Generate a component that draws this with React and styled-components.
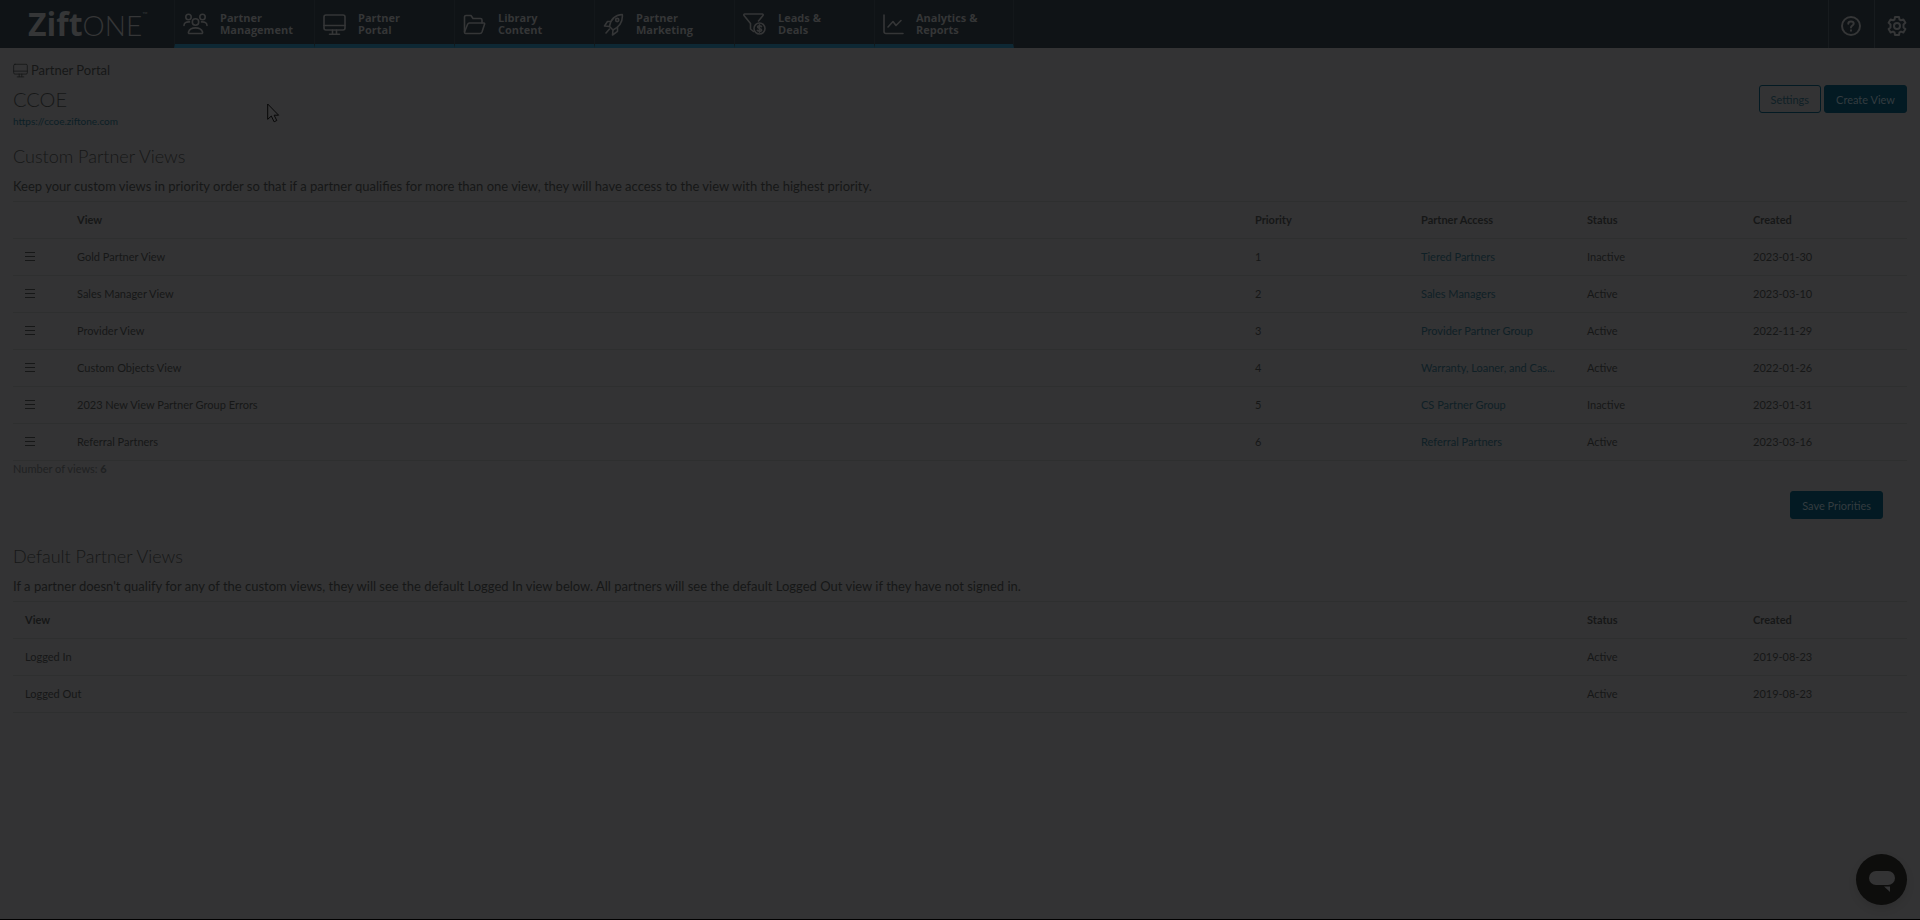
import React from "react";
import styled, { createGlobalStyle } from "styled-components";

const GlobalStyle = createGlobalStyle`
  * {
    box-sizing: border-box;
  }

  body {
    margin: 0;
    background: #333334;
    color: #161717;
    font-family: Lato, "Liberation Sans", sans-serif;
    font-size: 11px;
  }
`;

const PartnersIcon = () => (
  <Glyph width="25" height="22" viewBox="0 0 25 22">
    <circle cx="5.5" cy="4" r="2.7" />
    <circle cx="19.5" cy="4" r="2.7" />
    <circle cx="12.5" cy="9" r="3.2" />
    <path d="M1 12.500C1 10 3 8.700 6.500 8.900M24 12.500C24 10 22 8.700 18.500 8.900" />
    <path d="M6.500 20.500h12c1 0 1.300-.8 1-1.600-1-2.800-3.400-4-7-4s-6 1.200-7 4c-.3.800 0 1.600 1 1.600z" />
  </Glyph>
);

const MonitorIcon = ({ size = 23, stroke }) => (
  <Glyph width={size} height={size} viewBox="0 0 23 23" $stroke={stroke}>
    <rect x="1" y="2" width="21" height="15" rx="2" />
    <path d="M1 12.500h21M9.500 17v4M13.500 17v4M6.500 21.300h10" />
  </Glyph>
);

const FolderIcon = () => (
  <Glyph width="23" height="22" viewBox="0 0 23 22">
    <path d="M1.500 19V4A1.500 1.500 0 0 1 3 2.500h5l2 3h7.500A1.500 1.500 0 0 1 19 7v3" />
    <path d="M1.500 19l3-7.500c.4-1 1-1.500 2-1.500h14.500c.5 0 .8.500.6 1l-2.600 8c-.4 1-1 1.500-2 1.500H2.500c-.6 0-1-.5-1-1.500z" />
  </Glyph>
);

const RocketIcon = () => (
  <Glyph width="21" height="23" viewBox="0 0 21 23">
    <path d="M6.500 13.500C7.500 7 11.500 2 19.300 1.500 20 9 16 14 10 17z" />
    <circle cx="14.200" cy="7" r="1.600" />
    <path d="M8 8.500H4.500L1.500 13l5 .5M14.500 14.300v4L9.500 22l.5-5M6.500 16l-3.500 4" />
  </Glyph>
);

const FunnelIcon = () => (
  <Glyph width="23" height="24" viewBox="0 0 23 24">
    <path d="M10.500 19.500l-3-2.500v-5.500L1 3.500C.6 2.700 1 2 1.800 2h17.400c.8 0 1.200.7.800 1.500L15.500 9" />
    <circle cx="16.500" cy="16.500" r="5.500" />
    <path d="M18.500 14.600c-.5-.6-1.200-.8-2-.8-1.100 0-1.900.5-1.900 1.300 0 1.800 4 .9 4 2.900 0 .8-.9 1.300-2.100 1.300-.9 0-1.700-.3-2.200-1M16.500 12.700v7.600" />
  </Glyph>
);

const ChartIcon = () => (
  <Glyph width="21" height="22" viewBox="0 0 21 22">
    <path d="M1 2v16.500a2 2 0 0 0 2 2h17M5 14l5-5.500 3 4L18 7.500" />
  </Glyph>
);

const HelpIcon = () => (
  <Glyph width="20" height="20" viewBox="0 0 20 20" $stroke={2}>
    <circle cx="10" cy="10" r="9" />
    <path d="M7.300 7.800C7.300 6.300 8.500 5.500 10 5.500s2.700.9 2.700 2.200c0 1.800-2.700 1.900-2.700 3.800M10 14.200v.6" />
  </Glyph>
);

const GearIcon = () => (
  <Glyph width="20" height="20" viewBox="0 0 20 20" $stroke={2}>
    <path d="M8 1h4l.5 2.500 1.500.8 2.400-.9 2 3.400-1.900 1.700v2.900l1.900 1.700-2 3.400-2.400-.9-1.500.8L12 19H8l-.5-2.600-1.500-.8-2.400.9-2-3.400 1.900-1.700V8.500L1.600 6.800l2-3.400 2.400.9 1.500-.8z" />
    <circle cx="10" cy="10" r="3" />
  </Glyph>
);

const navItems = [
  { label: ["Partner", "Management"], icon: <PartnersIcon /> },
  { label: ["Partner", "Portal"], icon: <MonitorIcon /> },
  { label: ["Library", "Content"], icon: <FolderIcon /> },
  { label: ["Partner", "Marketing"], icon: <RocketIcon /> },
  { label: ["Leads &", "Deals"], icon: <FunnelIcon /> },
  { label: ["Analytics &", "Reports"], icon: <ChartIcon /> },
];

const customViews = [
  { name: "Gold Partner View", access: "Tiered Partners", status: "Inactive", created: "2023-01-30" },
  { name: "Sales Manager View", access: "Sales Managers", status: "Active", created: "2023-03-10" },
  { name: "Provider View", access: "Provider Partner Group", status: "Active", created: "2022-11-29" },
  { name: "Custom Objects View", access: "Warranty, Loaner, and Cas...", status: "Active", created: "2022-01-26" },
  { name: "2023 New View Partner Group Errors", access: "CS Partner Group", status: "Inactive", created: "2023-01-31" },
  { name: "Referral Partners", access: "Referral Partners", status: "Active", created: "2023-03-16" },
];

const defaultViews = [
  { name: "Logged In", status: "Active", created: "2019-08-23" },
  { name: "Logged Out", status: "Active", created: "2019-08-23" },
];

const App = () => {
  return (
    <Page>
      <GlobalStyle />
      <Header>
        <Logo href="#">
          <b>Zift</b>
          <span>ONE</span>
          <sup>™</sup>
        </Logo>
        <Nav>
          {navItems.map(({ label, icon }) => (
            <NavLink href="#" key={label.join(" ")}>
              {icon}
              <span>
                {label[0]}
                <br />
                {label[1]}
              </span>
            </NavLink>
          ))}
        </Nav>
        <HeaderButton aria-label="Help">
          <HelpIcon />
        </HeaderButton>
        <HeaderButton aria-label="Settings menu">
          <GearIcon />
        </HeaderButton>
      </Header>

      <Main>
        <Breadcrumb>
          <MonitorIcon size={15} stroke={1.2} />
          Partner Portal
        </Breadcrumb>
        <TitleRow>
          <Title>CCOE</Title>
          <Actions>
            <Button $outline>Settings</Button>
            <Button>Create View</Button>
          </Actions>
        </TitleRow>
        <SiteLink href="#">https://ccoe.ziftone.com</SiteLink>

        <Section>
          <SectionTitle>Custom Partner Views</SectionTitle>
          <Description>
            Keep your custom views in priority order so that if a partner
            qualifies for more than one view, they will have access to the view
            with the highest priority.
          </Description>
          <Table>
            <colgroup>
              <Col $width={52} />
              <Col />
              <Col $width={166} />
              <Col $width={166} />
              <Col $width={166} />
              <Col $width={166} />
            </colgroup>
            <thead>
              <tr>
                <th />
                <th>View</th>
                <th>Priority</th>
                <th>Partner Access</th>
                <th>Status</th>
                <th>Created</th>
              </tr>
            </thead>
            <tbody>
              {customViews.map((view, index) => (
                <tr key={view.name}>
                  <td>
                    <DragHandle aria-label={`Move ${view.name}`}>
                      <i />
                      <i />
                      <i />
                    </DragHandle>
                  </td>
                  <td>{view.name}</td>
                  <td>{index + 1}</td>
                  <td>
                    <a href="#">{view.access}</a>
                  </td>
                  <td>{view.status}</td>
                  <td>{view.created}</td>
                </tr>
              ))}
            </tbody>
          </Table>
          <Count>
            Number of views: <b>{customViews.length}</b>
          </Count>
          <SaveRow>
            <Button>Save Priorities</Button>
          </SaveRow>
        </Section>

        <Section>
          <SectionTitle>Default Partner Views</SectionTitle>
          <Description>
            If a partner doesn't qualify for any of the custom views, they will
            see the default Logged In view below. All partners will see the
            default Logged Out view if they have not signed in.
          </Description>
          <Table>
            <colgroup>
              <Col />
              <Col $width={166} />
              <Col $width={166} />
            </colgroup>
            <thead>
              <tr>
                <th>View</th>
                <th>Status</th>
                <th>Created</th>
              </tr>
            </thead>
            <tbody>
              {defaultViews.map((view) => (
                <tr key={view.name}>
                  <td>{view.name}</td>
                  <td>{view.status}</td>
                  <td>{view.created}</td>
                </tr>
              ))}
            </tbody>
          </Table>
        </Section>
      </Main>

      <ChatButton aria-label="Open chat">
        <svg width="28" height="22" viewBox="0 0 28 22" fill="#333334">
          <rect x="1" y="0" width="26" height="14" rx="7" />
          <path d="M16 15.500h6V21z" />
        </svg>
      </ChatButton>
      <Pointer width="13" height="20" viewBox="0 0 13 20">
        <path d="M.7 1v15.300l3.600-3.300 2.800 5.800 2.700-1.300-2.700-5.300h4.500z" />
      </Pointer>
    </Page>
  );
};

const Page = styled.div`
  position: relative;
  min-height: 100vh;
  border-bottom: 1px solid #000;
`;

const Glyph = styled.svg`
  flex: none;
  fill: none;
  stroke: currentColor;
  stroke-width: ${({ $stroke }) => $stroke || 1.6};
  stroke-linecap: round;
  stroke-linejoin: round;
`;

const Header = styled.header`
  display: flex;
  height: 48px;
  background: #0f1316;
  color: #353637;
`;

const Logo = styled.a`
  display: flex;
  align-items: baseline;
  width: 174px;
  padding-left: 28px;
  color: inherit;
  line-height: 48px;
  text-decoration: none;

  b {
    font-family: "Open Sans", sans-serif;
    font-size: 32px;
    font-weight: 700;
  }

  span {
    font-size: 28px;
    font-weight: 300;
  }

  sup {
    align-self: flex-start;
    font-size: 7px;
    line-height: 28px;
  }
`;

const Nav = styled.nav`
  display: flex;
  flex: 1;
`;

const NavLink = styled.a`
  display: flex;
  align-items: center;
  gap: 12px;
  width: 140px;
  padding: 4px 0 0 8px;
  border-left: 1px solid #13171a;
  border-bottom: 4px solid #0e2834;
  color: inherit;
  font-family: "Open Sans", sans-serif;
  font-size: 11px;
  font-weight: 700;
  line-height: 12px;
  text-decoration: none;

  &:last-child {
    border-right: 1px solid #13171a;
  }
`;

const HeaderButton = styled.button`
  display: flex;
  align-items: center;
  justify-content: center;
  width: 46px;
  padding: 4px 2px 0 0;
  border: 0;
  border-left: 1px solid #171b1e;
  background: none;
  color: inherit;
`;

const Main = styled.main`
  padding: 12px 13px 0;
`;

const Breadcrumb = styled.div`
  display: flex;
  align-items: center;
  gap: 3px;
  font-size: 13px;
  line-height: 20px;
`;

const TitleRow = styled.div`
  display: flex;
  align-items: center;
  justify-content: space-between;
  height: 28px;
  margin-top: 5px;
`;

const Title = styled.h1`
  margin: 0;
  font-size: 20px;
  font-weight: 300;
  line-height: 28px;
`;

const Actions = styled.div`
  display: flex;
  gap: 3px;
`;

const Button = styled.button`
  height: 28px;
  padding: 0 11px;
  border: 1px solid #031a23;
  border-radius: 3px;
  background: ${({ $outline }) => ($outline ? "transparent" : "#031a23")};
  color: ${({ $outline }) => ($outline ? "#0f2026" : "#333c40")};
  font-family: inherit;
  font-size: 11px;
`;

const SiteLink = styled.a`
  display: block;
  color: #0c1f26;
  font-size: 10px;
  line-height: 16px;
  text-decoration: none;
`;

const Section = styled.section`
  padding-top: 15px;
`;

const SectionTitle = styled.h2`
  margin: 0;
  font-size: 18px;
  font-weight: 300;
  line-height: 24px;
`;

const Description = styled.p`
  margin: 8px 0 5px;
  font-size: 13px;
  line-height: 20px;
`;

const Table = styled.table`
  width: 100%;
  border-top: 1px solid #2e2f2f;
  border-spacing: 0;
  table-layout: fixed;

  th,
  td {
    height: 37px;
    padding: 0 12px 1px;
    border-bottom: 1px solid #2e2f2f;
    text-align: left;
    white-space: nowrap;
  }

  th {
    font-weight: 700;
  }

  a {
    color: #0f2026;
    text-decoration: none;
  }
`;

const Col = styled.col`
  width: ${({ $width }) => ($width ? `${$width}px` : "auto")};
`;

const DragHandle = styled.button`
  display: flex;
  flex-direction: column;
  gap: 3px;
  width: 10px;
  padding: 0;
  border: 0;
  background: none;

  i {
    height: 1px;
    background: #161717;
  }
`;

const Count = styled.div`
  color: #1f2122;
  line-height: 16px;
`;

const SaveRow = styled.div`
  display: flex;
  justify-content: flex-end;
  padding: 14px 24px 10px 0;
`;

const ChatButton = styled.button`
  position: fixed;
  right: 13px;
  bottom: 15px;
  display: flex;
  align-items: center;
  justify-content: center;
  width: 51px;
  height: 51px;
  padding: 4px 0 0;
  border: 0;
  border-radius: 50%;
  background: #0d0d0c;
  box-shadow: 0 4px 8px rgba(0, 0, 0, 0.1);
`;

const Pointer = styled.svg`
  position: absolute;
  top: 103px;
  left: 267px;
  fill: #353536;
  stroke: #080808;
  stroke-width: 1;
  pointer-events: none;
`;

export default App;
